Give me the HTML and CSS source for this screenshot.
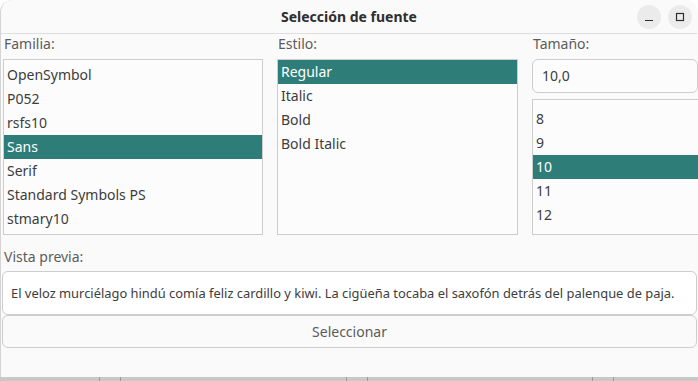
FILE: index.html
```html
<!DOCTYPE html>
<html lang="es">
<head>
  <meta charset="UTF-8">
  <meta name="viewport" content="width=device-width, initial-scale=1.0">
  <title>Selección de fuente</title>
  <link rel="stylesheet" href="styles.css">
</head>
<body>
<div class="window">
  <div class="titlebar">
    <span></span>
    <h1 class="title">Selección de fuente</h1>
    <div class="win-buttons">
      <div class="win-btn"><svg width="10" height="10" viewBox="0 0 10 10"><path d="M1 8.5h8" stroke="#2e2e2e" stroke-width="1.2"/></svg></div>
      <div class="win-btn"><svg width="10" height="10" viewBox="0 0 10 10"><rect x="1.5" y="1.5" width="7" height="7" fill="none" stroke="#2e2e2e" stroke-width="1.2"/></svg></div>
    </div>
  </div>

  <div class="pickers">
    <div class="column">
      <div class="label">Familia:</div>
      <ul class="list list-family">
        <li>OpenSymbol</li>
        <li>P052</li>
        <li>rsfs10</li>
        <li class="selected">Sans</li>
        <li>Serif</li>
        <li>Standard Symbols PS</li>
        <li>stmary10</li>
      </ul>
    </div>
    <div class="column">
      <div class="label">Estilo:</div>
      <ul class="list list-style">
        <li class="selected">Regular</li>
        <li>Italic</li>
        <li>Bold</li>
        <li>Bold Italic</li>
      </ul>
    </div>
    <div class="column">
      <div class="label">Tamaño:</div>
      <div class="size-entry">10,0</div>
      <ul class="list list-size">
        <li>8</li>
        <li>9</li>
        <li class="selected">10</li>
        <li>11</li>
        <li>12</li>
      </ul>
    </div>
  </div>

  <div class="label preview-label">Vista previa:</div>
  <div class="preview">El veloz murciélago hindú comía feliz cardillo y kiwi. La cigüeña tocaba el saxofón detrás del palenque de paja.</div>
  <button class="select-btn">Seleccionar</button>
</div>
<div class="taskbar">
  <span class="tick"></span><span class="tick"></span>
  <span class="gap-a"></span>
  <span class="tick"></span><span class="tick"></span>
  <span class="gap-b"></span>
  <span class="tick"></span><span class="tick"></span>
</div>
</body>
</html>
```

FILE: styles.css
```css
:root {
  --bg: #fafafa;
  --box-bg: #fcfcfc;
  --border: #cdcdcd;
  --text: #3d3d3d;
  --label: #5c5c5c;
  --accent: #2e7d79;
}

* { margin: 0; padding: 0; box-sizing: border-box; }

body {
  width: 698px;
  height: 381px;
  overflow: hidden;
  background: #ffffff;
  font-family: "Noto Sans", sans-serif;
  color: var(--text);
}

.window {
  width: 698px;
  height: 377px;
  background: var(--bg);
  border-left: 1px solid #d4d4d4;
  border-radius: 12px 12px 0 0;
  overflow: hidden;
  padding-left: 1px;
  padding-right: 1px;
}

.titlebar {
  height: 34px;
  display: grid;
  grid-template-columns: 1fr auto 1fr;
  align-items: center;
  border-bottom: 1px solid #dedede;
  margin-left: -1px;
}
.title {
  font-size: 14px;
  font-weight: bold;
  color: #2e2e2e;
}
.win-buttons {
  display: flex;
  justify-content: flex-end;
  gap: 7px;
  padding-right: 5px;
}
.win-btn {
  width: 24px;
  height: 24px;
  border-radius: 50%;
  background: #ebebeb;
  display: flex;
  align-items: center;
  justify-content: center;
}

.label {
  font-size: 14px;
  line-height: 20px;
  color: var(--label);
}

.pickers {
  display: grid;
  grid-template-columns: 260px 241px 170px;
  column-gap: 14px;
  padding-left: 1px;
}
.column .label { margin-bottom: 5px; margin-left: 1px; }

.list {
  list-style: none;
  height: 176px;
  background: var(--box-bg);
  border: 1px solid var(--border);
  font-size: 14px;
  overflow: hidden;
}
.list li {
  height: 24px;
  line-height: 24px;
  padding-left: 3px;
}
.list li.selected {
  background: var(--accent);
  color: #ffffff;
}
.list-family { padding-top: 3px; }
.list-size {
  height: 136px;
  padding-top: 7px;
}

.size-entry {
  width: 166px;
  height: 34px;
  margin-bottom: 6px;
  border: 1px solid var(--border);
  border-radius: 6px;
  background: var(--box-bg);
  font-size: 14px;
  line-height: 32px;
  padding-left: 9px;
}

.preview-label { margin-top: 12px; margin-bottom: 4px; margin-left: 2px; }

.preview {
  height: 44px;
  border: 1px solid var(--border);
  border-radius: 6px;
  background: #ffffff;
  font-size: 12.9px;
  line-height: 42px;
  padding-left: 8px;
  white-space: nowrap;
}

.select-btn {
  display: block;
  width: 100%;
  height: 33px;
  margin-top: 0;
  border: 1px solid var(--border);
  border-radius: 6px;
  background: var(--bg);
  font-family: "Noto Sans", sans-serif;
  font-size: 14px;
  color: #5a5a5a;
}

.taskbar {
  height: 4px;
  background: #c8c8c8;
  display: flex;
  padding-left: 99px;
}
.taskbar .tick {
  width: 1px;
  background: #9a9a9a;
  margin-right: 20px;
}
.taskbar .gap-a { width: 205px; }
.taskbar .gap-b { width: 204px; }
```
